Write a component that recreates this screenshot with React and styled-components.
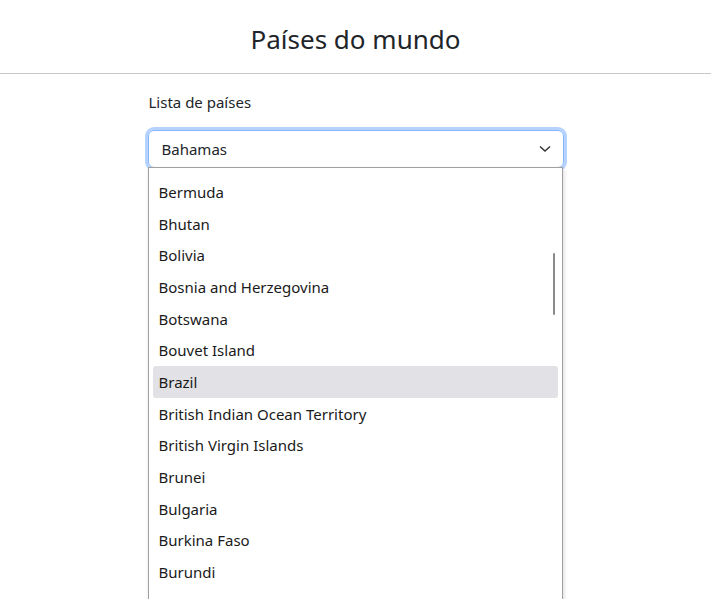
import React from "react";
import styled, { createGlobalStyle } from "styled-components";

const GlobalStyle = createGlobalStyle`
  html {
    overflow: hidden;
  }
  body {
    margin: 0;
    padding: 0;
    background: #fff;
    font-family: "Segoe UI", "Noto Sans", "Open Sans", sans-serif;
    color: #212529;
  }
`;

const Header = styled.header`
  height: 73px;
  border-bottom: 1px solid #c8c8c8;
  display: flex;
  align-items: center;
  justify-content: center;
`;

const Title = styled.h1`
  margin: 4px 0 0;
  font-size: 26px;
  font-weight: 400;
  color: #212529;
`;

const Main = styled.main`
  width: 416px;
  margin: 0 auto;
  padding-top: 18px;
  display: flex;
  flex-direction: column;
`;

const Label = styled.label`
  font-size: 15px;
  margin: 0 0 18px 1px;
`;

const Select = styled.div`
  display: flex;
  flex-direction: column;
`;

const SelectBox = styled.div`
  height: 38px;
  box-sizing: border-box;
  border: 1px solid #86b7fe;
  border-radius: 6px;
  box-shadow: 0 0 0 3px #b6d3fe;
  display: flex;
  align-items: center;
  justify-content: space-between;
  padding: 0 12px 0 13px;
  font-size: 15px;
`;

const Menu = styled.div`
  position: relative;
  margin: -1px 1px 0 0;
  padding: 8px 4px 0 4px;
  height: 440px;
  overflow: hidden;
  background: #fff;
  border: 1px solid #a0a0a0;
  box-shadow: 1px 2px 4px rgba(0, 0, 0, 0.15);
`;

const List = styled.ul`
  margin: 0;
  padding: 0;
  list-style: none;
`;

const Item = styled.li`
  height: 31.7px;
  display: flex;
  align-items: center;
  padding-left: 6px;
  font-size: 15px;
  border-radius: 3px;
  background: ${(p) => (p.$active ? "#e2e1e6" : "transparent")};
  color: #1a1a1a;
`;

/* overlay scrollbar, drawn over the list */
const Thumb = styled.div`
  position: absolute;
  top: 85px;
  right: 7px;
  width: 2px;
  height: 62px;
  background: #8a8a8a;
  border-radius: 1px;
`;

const countries = [
  "Bermuda",
  "Bhutan",
  "Bolivia",
  "Bosnia and Herzegovina",
  "Botswana",
  "Bouvet Island",
  "Brazil",
  "British Indian Ocean Territory",
  "British Virgin Islands",
  "Brunei",
  "Bulgaria",
  "Burkina Faso",
  "Burundi",
  "Cambodia",
];

const Chevron = () => (
  <svg width="12" height="8" viewBox="0 0 12 8">
    <polyline
      points="1,1.5 6,6 11,1.5"
      fill="none"
      stroke="#333"
      strokeWidth="1.4"
    />
  </svg>
);

const App = () => {
  return (
    <>
      <GlobalStyle />
      <Header>
        <Title>Países do mundo</Title>
      </Header>
      <Main>
        <Label>Lista de países</Label>
        <Select>
          <SelectBox>
            <span>Bahamas</span>
            <Chevron />
          </SelectBox>
          <Menu>
            <List>
              {countries.map((c) => (
                <Item key={c} $active={c === "Brazil"}>
                  {c}
                </Item>
              ))}
            </List>
            <Thumb />
          </Menu>
        </Select>
      </Main>
    </>
  );
};

export default App;
